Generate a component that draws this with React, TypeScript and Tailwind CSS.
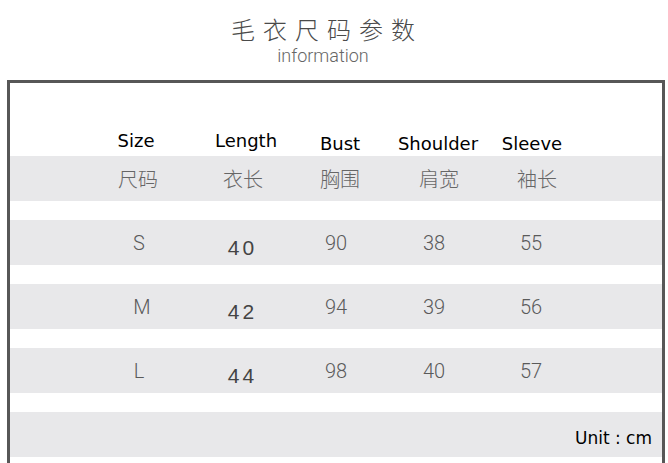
const widths = ["w-[100px]", "w-[114px]", "w-[76px]", "w-[120px]", "w-[72px]"];

const enHeads = [
  { t: "Size", c: "-translate-x-[1px]" },
  { t: "Length", c: "translate-x-[2px]" },
  { t: "Bust", c: "translate-x-[1px] translate-y-[3px]" },
  { t: "Shoulder", c: "translate-x-[1px] translate-y-[3px]" },
  { t: "Sleeve", c: "-translate-x-[1px] translate-y-[3px]" },
];

const cnHeads = [
  { t: "尺码", c: "translate-x-[1px]" },
  { t: "衣长", c: "-translate-x-[1px]" },
  { t: "胸围", c: "translate-x-[1px]" },
  { t: "肩宽", c: "translate-x-[2px]" },
  { t: "袖长", c: "translate-x-[4px]" },
];

const sizes = [
  { s: "S", l: "40", b: "90", sh: "38", sl: "55", sc: "translate-x-[2px]" },
  { s: "M", l: "42", b: "94", sh: "39", sl: "56", sc: "translate-x-[5px]" },
  { s: "L", l: "44", b: "98", sh: "40", sl: "57", sc: "translate-x-[2px]" },
];

const light = "font-['Roboto',sans-serif] font-light text-[20px] text-[#5a5a5a] leading-none";

function Row({ children, className = "" }: { children: React.ReactNode; className?: string }) {
  return <div className={"flex pl-[77px] " + className}>{children}</div>;
}

export default function App() {
  return (
    <div className="w-[668px] h-[463px] overflow-hidden bg-white">
      <div className="w-[646px] flex flex-col items-center pt-[16px]">
        <div className="pl-[8px] tracking-[8px] text-[24px] leading-[26px] text-[#4a4a4a] font-['Noto_Sans_CJK_SC',sans-serif] font-light">
          毛衣尺码参数
        </div>
        <div className="mt-[5px] font-['Roboto',sans-serif] font-light text-[18px] leading-[18px] text-[#666]">information</div>
      </div>

      <div className="ml-[7px] mt-[15px] w-[658px] h-[400px] border-[3px] border-b-0 border-[#575757]">
        <Row className="h-[73px] items-end pb-[6px]">
          {enHeads.map((h, i) => (
            <div key={h.t} className={widths[i] + " text-center text-[18px] leading-none text-black font-['DejaVu_Sans',sans-serif] " + h.c}>
              {h.t}
            </div>
          ))}
        </Row>

        <div className="flex flex-col gap-[19px]">
          <Row className="h-[45px] items-center bg-[#e8e8ea]">
            {cnHeads.map((h, i) => (
              <div key={h.t} className={widths[i] + " text-center text-[20px] leading-none text-[#666] font-['Noto_Sans_CJK_SC',sans-serif] font-light " + h.c}>
                {h.t}
              </div>
            ))}
          </Row>

          {sizes.map((r) => (
            <Row key={r.s} className="h-[45px] items-center bg-[#e8e8ea]">
              <div className={widths[0] + " text-center " + light + " " + r.sc}>{r.s}</div>
              <div className={widths[1] + " text-center pt-[10px] pl-[3px] font-['Liberation_Sans',sans-serif] text-[21px] tracking-[3px] leading-none text-[#444] -translate-x-[3px]"}>
                {r.l}
              </div>
              <div className={widths[2] + " text-center " + light + " -translate-x-[3px]"}>{r.b}</div>
              <div className={widths[3] + " text-center " + light + " -translate-x-[3px]"}>{r.sh}</div>
              <div className={widths[4] + " text-center " + light + " -translate-x-[2px]"}>{r.sl}</div>
            </Row>
          ))}

          <div className="h-[45px] flex items-center justify-end pr-[10px] pt-[8px] bg-[#e8e8ea]">
            <span className="font-['DejaVu_Sans',sans-serif] text-[17px] leading-none text-black">Unit : cm</span>
          </div>
        </div>
      </div>
    </div>
  );
}
